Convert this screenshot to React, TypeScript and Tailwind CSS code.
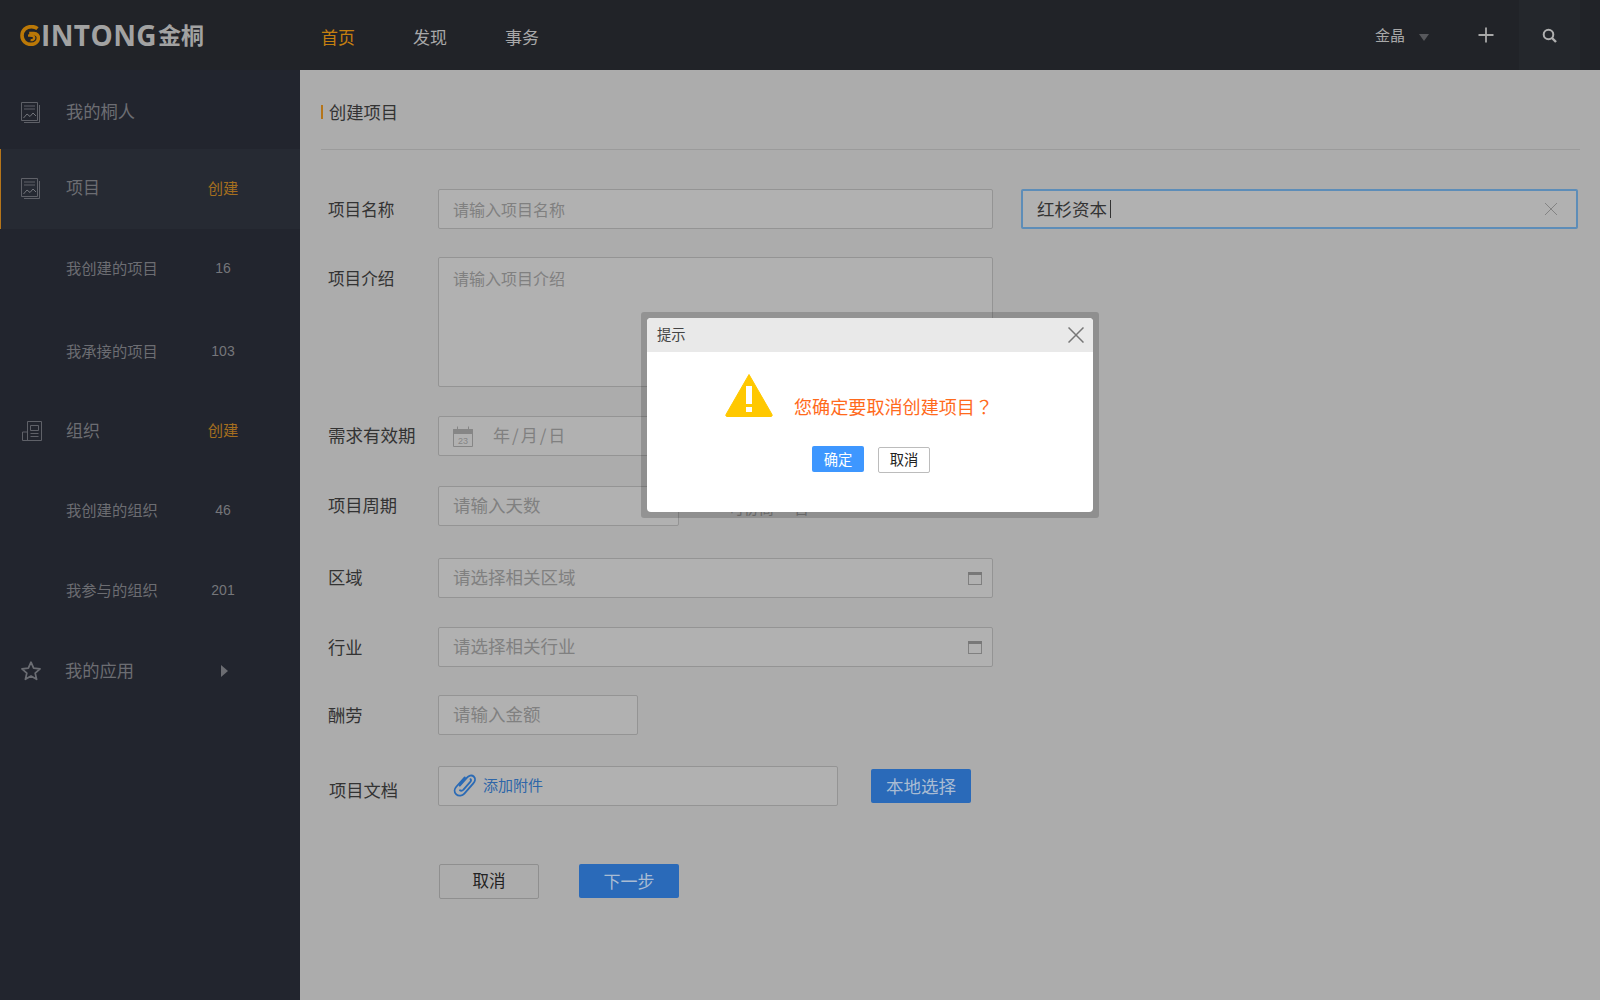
const font = { fontFamily: '"Noto Sans CJK SC", "Liberation Sans", sans-serif' };

function DocIcon() {
  return (
    <svg width="20" height="22" viewBox="0 0 20 22" fill="none" stroke="#5f6168" strokeWidth="1" className="shrink-0">
      <path d="M1.5 19.5V1.5H17.5V19.5H1.5Z" />
      <path d="M4 21.5H19.5V4" />
      <path d="M4 5H15M4 8H15" />
      <path d="M3.5 17L7 13L10 15.5L13 12L16 15" stroke="#74767c" />
    </svg>
  );
}

function OrgIcon() {
  return (
    <svg width="22" height="21" viewBox="0 0 22 21" fill="none" stroke="#5f6168" strokeWidth="1" className="shrink-0 ml-[1px]">
      <path d="M6.5 12V1.5H20.5V20.5H1.5V12H6.5V20.5" />
      <path d="M9.5 5.5H17.5V10.5H9.5Z" />
      <path d="M9.5 13.5H17.5M9.5 16.5H17.5" />
    </svg>
  );
}

function StarIcon() {
  return (
    <svg width="22" height="22" viewBox="0 0 20 20" fill="none" stroke="#6b6d73" strokeWidth="1.6" className="shrink-0 mt-[2px]">
      <path d="M10 2L12.4 7.4L18.2 8L13.8 11.9L15.1 17.6L10 14.6L4.9 17.6L6.2 11.9L1.8 8L7.6 7.4Z" strokeLinejoin="round" />
    </svg>
  );
}

function LogoG() {
  return (
    <svg width="20" height="21" viewBox="0 0 20 21" fill="none" className="shrink-0">
      <path d="M17.5 3.6C15.8 2.2 13.7 1.6 11.4 1.6C6 1.6 2 5.4 2 10.6C2 15.8 6 19.4 11 19.4C15 19.4 18.2 17 18.4 13.2C18.5 10.6 16.8 8.6 14 8.6H9.2" stroke="#bb7807" strokeWidth="3.6" />
      <path d="M8 10.6C11 10.4 14.4 10.8 14.2 13C14 14.6 12.6 15.4 10.6 15" stroke="#bb7807" strokeWidth="2.4" />
    </svg>
  );
}

function CalendarSmall() {
  return (
    <svg width="14" height="13" viewBox="0 0 14 13" fill="none" className="shrink-0">
      <rect x="0.5" y="0.5" width="13" height="12" stroke="#808080" />
      <rect x="0" y="0" width="14" height="3" fill="#787878" />
    </svg>
  );
}

function CalendarDate() {
  return (
    <svg width="20" height="21" viewBox="0 0 20 21" fill="none" className="shrink-0">
      <path d="M0.5 3.5H19.5V20.5H0.5Z" stroke="#868686" />
      <path d="M0.5 3.5H19.5V7.5H0.5Z" fill="#868686" stroke="#868686" />
      <path d="M4.5 0.5V4.5M15.5 0.5V4.5" stroke="#868686" />
      <text x="10" y="18" textAnchor="middle" fontSize="9" fill="#868686" fontFamily="Liberation Sans">23</text>
    </svg>
  );
}

function Paperclip() {
  return (
    <svg width="24" height="24" viewBox="0 0 22 22" fill="none" stroke="#2a6ab5" strokeWidth="1.7" strokeLinecap="round" className="shrink-0">
      <path d="M6.2 11.6L12.6 4.4C14.2 2.6 17 1.4 19 3.2C21 5 20.2 7.8 18.6 9.6L10.4 18.8C8.6 20.8 5.2 21.6 3 19.6C0.8 17.6 1.2 14.6 3 12.6L10.8 4" />
      <path d="M6.4 15.8C7.6 16.8 8.8 16 9.6 15.2L15.8 8.2C16.6 7.2 16.8 6.2 16 5.6" />
    </svg>
  );
}

function SideRow({ h, icon, label, labelClass, right, rightClass, active }: { h: string; icon?: React.ReactNode; label: string; labelClass?: string; right?: React.ReactNode; rightClass?: string; active?: boolean }) {
  return (
    <div className={`${h} flex items-center ${active ? "bg-[#262a33] border-l border-[#b5751a] pl-[19px]" : "pl-5"}`}>
      <div className="w-[46px] flex items-center">{icon}</div>
      <div className={`flex-1 ${labelClass ?? "text-[15.3px] text-[#6c6d72] pb-[2px]"}`}>{label}</div>
      {right !== undefined && <div className={`w-[60px] mr-[47px] text-center ${rightClass ?? "text-[14px] text-[#75767a] font-['Liberation_Sans']"}`}>{right}</div>}
    </div>
  );
}

function Label({ children, className }: { children: React.ReactNode; className: string }) {
  return <div className={`w-[110px] shrink-0 text-[#333333] whitespace-nowrap ${className}`}>{children}</div>;
}

function Field({ w, children, className }: { w: string; children?: React.ReactNode; className: string }) {
  return (
    <div className={`${w} h-10 shrink-0 bg-[#b1b1b1] border border-[#949494] rounded-[2px] flex items-center pl-[14px] pr-[10px] text-[#808080] ${className}`}>
      {children}
    </div>
  );
}

export default function App() {
  return (
    <div className="w-[1600px] h-[1000px] relative overflow-hidden bg-[#acacac] flex flex-col" style={font}>
      <header className="h-[70px] shrink-0 bg-[#212328] flex items-center">
        <div className="w-[321px] shrink-0 pl-5 flex items-center">
          <LogoG />
          <span className="ml-[1px] text-[28px] leading-none font-bold tracking-[0.4px] text-[#a2a2a2] font-['Open_Sans']">INTONG</span>
          <span className="ml-[1px] -mt-[2px] text-[23px] leading-none font-bold text-[#a2a2a2]">金桐</span>
        </div>
        <nav className="flex gap-[58px] text-[17px] pt-[3px]">
          <span className="text-[#c47f10]">首页</span>
          <span className="text-[#a8a8a8]">发现</span>
          <span className="text-[#a8a8a8]">事务</span>
        </nav>
        <div className="ml-auto flex items-center">
          <span className="text-[15px] text-[#a8a8a8]">金晶</span>
          <span className="ml-[14px] mt-[4px] w-0 h-0 border-x-[5px] border-x-transparent border-t-[7px] border-t-[#57585c]" />
          <svg width="16" height="16" viewBox="0 0 16 16" className="ml-[49px]" stroke="#a8a8a8" strokeWidth="1.8"><path d="M8 0.5V15.5M0.5 8H15.5" /></svg>
          <div className="ml-[25px] mr-[20px] w-[61px] h-[70px] bg-[#24272c] flex items-center justify-center">
            <svg width="15" height="15" viewBox="0 0 15 15" fill="none" stroke="#b0b0b0"><circle cx="6.5" cy="6.5" r="4.8" strokeWidth="2" /><path d="M10 10L14 14" strokeWidth="2.4" /></svg>
          </div>
        </div>
      </header>

      <div className="flex-1 flex min-h-0">
        <aside className="w-[300px] shrink-0 bg-[#22252e]">
          <SideRow h="h-[79px] pt-[4px]" icon={<DocIcon />} label="我的桐人" labelClass="text-[17.3px] text-[#6c6d72] pb-[2px]" />
          <SideRow h="h-[80px] pb-[3px]" active icon={<DocIcon />} label="项目" labelClass="text-[17px] text-[#6c6d72] pb-[2px]" right="创建" rightClass="text-[15.3px] text-[#a56f1f]" />
          <SideRow h="h-[79px]" label="我创建的项目" right="16" />
          <SideRow h="h-[83px] pt-[3px]" label="我承接的项目" right="103" />
          <SideRow h="h-[79px]" icon={<OrgIcon />} label="组织" labelClass="text-[17px] text-[#6c6d72] pb-[2px]" right="创建" rightClass="text-[15.3px] text-[#a56f1f] pb-[2px]" />
          <SideRow h="h-[80px]" label="我创建的组织" right="46" />
          <SideRow h="h-[80px]" label="我参与的组织" right="201" />
          <SideRow h="h-[80px]" icon={<StarIcon />} label="我的应用" labelClass="text-[17.3px] text-[#6c6d72] -ml-[1px]" right={<span className="inline-block w-0 h-0 border-y-[6px] border-y-transparent border-l-[7px] border-l-[#6c6d72]" />} rightClass="pl-[2px]" />
        </aside>

        <main className="flex-1 pl-[22px] pr-[20px]">
          <div className="h-[80px] border-b border-[#9b9b9b] flex items-center pt-[5px] -ml-[1px]">
            <span className="w-[2px] h-[14px] bg-[#b5751a]" />
            <span className="ml-[6px] text-[17.3px] text-[#333333]">创建项目</span>
          </div>

          <div className="pl-[6px]">
            <div className="mt-[39px] flex items-center">
              <Label className="text-[16.6px]">项目名称</Label>
              <Field w="w-[555px]" className="text-[16px] pb-[1px]">请输入项目名称</Field>
              <div className="ml-[28px] w-[557px] h-10 bg-[#b1b1b1] border-2 border-[#5d8db8] rounded-[2px] flex items-center pl-[14px] pr-[18px] text-[17.5px] text-[#333333]">
                <span>红杉资本</span>
                <span className="ml-[3px] w-px h-[18px] bg-[#333333]" />
                <svg width="14" height="14" viewBox="0 0 14 14" className="ml-auto" stroke="#838383" strokeWidth="1"><path d="M1 1L13 13M13 1L1 13" /></svg>
              </div>
            </div>

            <div className="mt-[28px] flex items-start">
              <Label className="text-[16.6px] pt-[9px]">项目介绍</Label>
              <div className="w-[555px] h-[130px] shrink-0 bg-[#b1b1b1] border border-[#949494] rounded-[2px] pl-[14px] pt-[8px] text-[16px] text-[#808080]">请输入项目介绍</div>
            </div>

            <div className="mt-[29px] flex items-center">
              <Label className="text-[17.5px] pb-[2px]">需求有效期</Label>
              <Field w="w-[555px]" className="text-[17px]">
                <CalendarDate />
                <span className="ml-[20px] tracking-[2px] pb-[2px]">年/月/日</span>
              </Field>
            </div>

            <div className="mt-[30px] flex items-center relative">
              <Label className="text-[17.3px] pb-[2px]">项目周期</Label>
              <Field w="w-[241px]" className="text-[17.5px] pb-[2px]">请输入天数</Field>
              <span className="ml-[50px] pt-[4px] text-[15px] text-[#7d7d7d]">可协商</span>
              <span className="ml-[20px] pt-[4px] text-[15px] text-[#7d7d7d]">否</span>
            </div>

            <div className="mt-[32px] flex items-center">
              <Label className="text-[17.3px] pb-[2px]">区域</Label>
              <Field w="w-[555px]" className="text-[17.5px] justify-between">
                <span className="pb-[2px]">请选择相关区域</span>
                <CalendarSmall />
              </Field>
            </div>

            <div className="mt-[29px] flex items-center">
              <Label className="text-[17.3px] pb-[1px]">行业</Label>
              <Field w="w-[555px]" className="text-[17.5px] justify-between">
                <span className="pb-[2px]">请选择相关行业</span>
                <CalendarSmall />
              </Field>
            </div>

            <div className="mt-[28px] flex items-center">
              <Label className="text-[17.3px] pb-[1px]">酬劳</Label>
              <Field w="w-[200px]" className="text-[17.5px] pb-[2px]">请输入金额</Field>
            </div>

            <div className="mt-[31px] flex items-center">
              <Label className="text-[17.3px] pt-[8px] pl-[1px]">项目文档</Label>
              <Field w="w-[400px]" className="text-[15px] pb-[2px]">
                <Paperclip />
                <span className="ml-[6px] text-[#2e66a8]">添加附件</span>
              </Field>
              <div className="ml-[33px] w-[100px] h-[34px] bg-[#2a6ab9] rounded-[2px] flex items-center justify-center text-[17.5px] text-[#a9bcd3]">本地选择</div>
            </div>

            <div className="mt-[58px] ml-[111px] flex items-center gap-[40px]">
              <div className="w-[100px] h-[35px] border border-[#8f8f8f] rounded-[2px] flex items-center justify-center text-[16.5px] text-[#222222] pb-[2px]">取消</div>
              <div className="w-[100px] h-[34px] -mt-[1px] bg-[#2a6ab9] rounded-[2px] flex items-center justify-center text-[17px] text-[#a9bcd3] pb-[1px]">下一步</div>
            </div>
          </div>
        </main>
      </div>

      <div className="absolute left-[641px] top-[312px] w-[458px] h-[206px] p-[6px] rounded-[3px] bg-black/[.17]">
        <div className="h-full bg-white rounded-[4px] overflow-hidden">
          <div className="h-[34px] bg-[#e9e9e9] flex items-center justify-between pl-[10px] pr-[9px] text-[14.3px] text-[#444444]">
            <span className="pb-[2px]">提示</span>
            <svg width="16" height="16" viewBox="0 0 16 16" stroke="#777777" strokeWidth="1.5"><path d="M0.5 0.5L15.5 15.5M15.5 0.5L0.5 15.5" /></svg>
          </div>
          <div className="mt-[21px] flex items-start pl-[78px]">
            <svg width="48" height="44" viewBox="0 0 48 44" className="shrink-0">
              <path d="M24 1.5L47 41.5C47.5 42.5 47 43.5 46 43.5H2C1 43.5 0.5 42.5 1 41.5Z" fill="#ffc800" stroke="#ffc800" strokeLinejoin="round" />
              <rect x="21" y="13" width="6" height="18" fill="#ffffff" />
              <rect x="21" y="34" width="6" height="5" fill="#ffffff" />
            </svg>
            <div className="ml-[21px] mt-[20px] text-[18.1px] leading-[26px] text-[#ff6a1c] whitespace-nowrap">
              您确定要取消创建项目<span className="font-['Noto_Sans_CJK_JP']">？</span>
            </div>
          </div>
          <div className="mt-[27px] ml-[165px] flex items-start gap-[14px] text-[14.3px]">
            <div className="w-[52px] h-[26px] bg-[#3e97ff] rounded-[2px] text-white flex items-center justify-center pb-[1px]">确定</div>
            <div className="w-[52px] h-[26px] mt-[1px] border border-[#bcbcbc] rounded-[2px] text-[#222222] flex items-center justify-center pb-[2px]">取消</div>
          </div>
        </div>
      </div>
    </div>
  );
}
